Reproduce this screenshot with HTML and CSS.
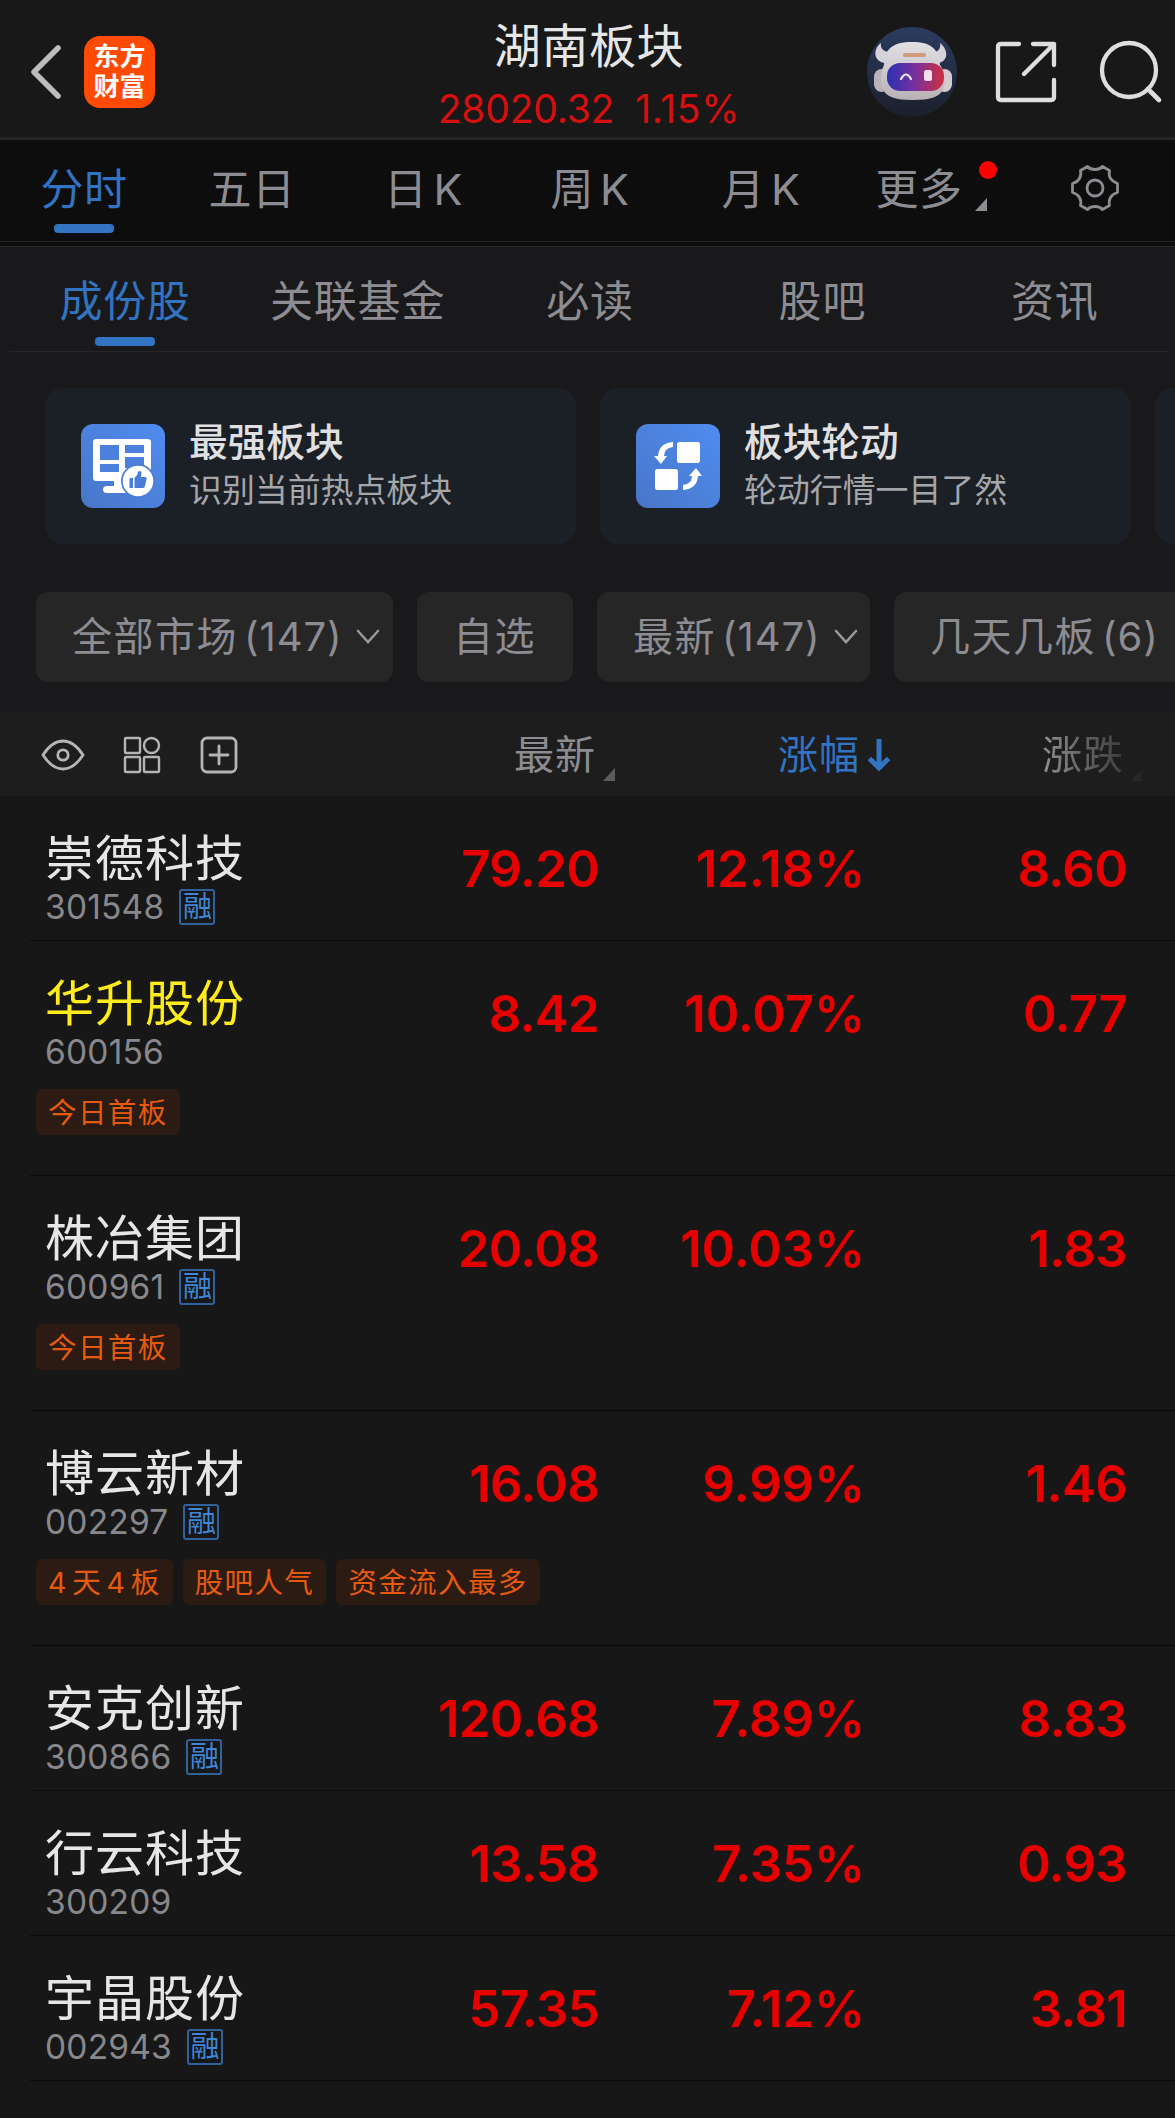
FILE: index.html
```
<!DOCTYPE html>
<html lang="zh-CN">
<head>
<meta charset="utf-8">
<title>湖南板块</title>
<link rel="stylesheet" href="styles.css">
</head>
<body>
<header class="topbar">
  <div class="topbar-left">
    <svg class="back" viewBox="0 0 32 56"><path d="M28 4 4 28 28 52" fill="none" stroke="#bdbdbd" stroke-width="5.5" stroke-linecap="round" stroke-linejoin="round"/></svg>
    <div class="logo"><span>东方</span><span>财富</span></div>
  </div>
  <div class="heading">
    <h1>湖南板块</h1>
    <p><span class="index">28020.32</span><span class="change">1.15%</span></p>
  </div>
  <div class="topbar-right">
    <svg class="robot" viewBox="0 0 90 90">
      <defs>
        <linearGradient id="sky" x1="0" y1="0" x2="0" y2="1"><stop offset="0" stop-color="#2b3c60"/><stop offset="1" stop-color="#1b1f2b"/></linearGradient>
        <linearGradient id="visor" x1="0" y1="0" x2="1" y2="0"><stop offset="0" stop-color="#2b31b4"/><stop offset=".5" stop-color="#7a2f9c"/><stop offset="1" stop-color="#cf3040"/></linearGradient>
        <linearGradient id="shell" x1="0" y1="0" x2="0" y2="1"><stop offset="0" stop-color="#e2e0e5"/><stop offset="1" stop-color="#b8b1b6"/></linearGradient>
      </defs>
      <circle cx="45" cy="45" r="45" fill="url(#sky)"/>
      <path d="M14 16C7 21 5 33 17 36L24 25C17 25 13 22 14 16ZM73 16C80 21 83 33 72 36L66 25C71 25 74 22 73 16Z" fill="#d5d3d9"/>
      <rect x="7" y="42" width="15" height="23" rx="7.500" fill="#b9b2b8"/><rect x="70" y="42" width="15" height="23" rx="7.500" fill="#d3cbd0"/>
      <path d="M17 38C17 22 26 15 45 15S72 22 73 38C77 44 79 52 77 60C74 70 64 73 46 73S18 70 15 60C13 52 14 44 17 38Z" fill="url(#shell)"/>
      <rect x="20" y="36" width="57" height="28" rx="13" fill="url(#visor)"/>
      <path d="M34 52q5-9 10 0" fill="none" stroke="#e9e6ff" stroke-width="2.200" stroke-linecap="round"/><rect x="57" y="43" width="8" height="11" rx="2.500" fill="#f3dfee"/>
      <rect x="36" y="26" width="23" height="4" rx="2" fill="#cf9b7c"/>
    </svg>
    <svg class="share" viewBox="0 0 62 62"><path d="M24 3H6Q3 3 3 6V56Q3 59 6 59H56Q59 59 59 56V39M38 3H59V24M59 3 29 33" fill="none" stroke="#dedede" stroke-width="4.3" stroke-linecap="round" stroke-linejoin="round"/></svg>
    <svg class="search" viewBox="0 0 64 64"><circle cx="30" cy="30" r="27" fill="none" stroke="#dedede" stroke-width="4.3"/><path d="M49 49 60 60" stroke="#dedede" stroke-width="4.6" stroke-linecap="round"/></svg>
  </div>
</header>

<nav class="periods">
  <a class="active">分时</a><a>五日</a><a>日 K</a><a>周 K</a><a>月 K</a>
  <a class="more">更多<i class="dot"></i><i class="corner"></i></a>
  <svg class="gear" viewBox="0 0 50 50" fill="none" stroke="#8c8c92" stroke-width="2.800" stroke-linejoin="round"><circle cx="25" cy="25" r="8"/><path d="M17.500 3.500Q20 6.500 25 6.500T32.500 3.500L39.500 7.500Q38.500 12.500 40.500 15.500T47.500 20.500V29.500Q42.500 31 40.500 34.500T39.500 42.500L32.500 46.500Q30 43.500 25 43.500T17.500 46.500L10.500 42.500Q11.500 38 9.500 34.500T2.500 29.500V20.500Q7.500 19 9.500 15.500T10.500 7.500Z"/></svg>
</nav>

<nav class="sections">
  <a class="active">成份股</a><a>关联基金</a><a>必读</a><a>股吧</a><a>资讯</a>
</nav>

<section class="cards">
  <article class="card">
    <svg class="card-icon" viewBox="0 0 84 84">
      <defs><linearGradient id="blue" x1="1" y1="0" x2="0" y2="1"><stop offset="0" stop-color="#508cf0"/><stop offset="1" stop-color="#4876c8"/></linearGradient></defs>
      <rect width="84" height="84" rx="12" fill="url(#blue)"/>
      <rect x="12" y="15" width="58" height="42" rx="3" fill="#fff"/>
      <path d="M19 21H38V36H19ZM44 21H63V29H44ZM19 40H38V48H19ZM44 33H63V44H44Z" fill="#4b80dc"/>
      <path d="M33 57V62H26Q22 62 22 65.500T26 69H46V57Z" fill="#fff"/>
      <circle cx="57" cy="57" r="17" fill="#4a7dd8"/><circle cx="57" cy="57" r="15.300" fill="#fff"/>
      <path d="M48.500 54H52V64H48.500ZM53.500 54Q57 51 57 48Q59 46 60.500 48.500L60 53H64Q66 53 65.500 55.500L64 62Q63.500 64 62 64H53.500Z" fill="#4a7dd8"/>
    </svg>
    <div><h2>最强板块</h2><p>识别当前热点板块</p></div>
  </article>
  <article class="card">
    <svg class="card-icon" viewBox="0 0 84 84">
      <rect width="84" height="84" rx="12" fill="url(#blue)"/>
      <rect x="41" y="18" width="23" height="21" rx="2.500" fill="#fff"/><rect x="19" y="45" width="23" height="21" rx="2.500" fill="#fff"/>
      <path d="M37 18Q23 19 22 32H18L25 40 31 32H28Q28 24 37 23ZM47 66Q61 65 62 52H66L60 44 53 52H56Q56 60 47 61Z" fill="#fff"/>
    </svg>
    <div><h2>板块轮动</h2><p>轮动行情一目了然</p></div>
  </article>
  <article class="card"></article>
</section>

<section class="filters">
  <button class="wide">全部市场<b>(147)</b><svg viewBox="0 0 24 16"><path d="M2 2 12 13 22 2"/></svg></button>
  <button class="own">自选</button>
  <button class="latest">最新<b>(147)</b><svg viewBox="0 0 24 16"><path d="M2 2 12 13 22 2"/></svg></button>
  <button class="days">几天几板<b>(6)</b></button>
</section>

<div class="table-head">
  <div class="tools">
    <svg width="44" height="38" viewBox="0 0 44 38"><path d="M2 19Q11 5 22 5T42 19Q33 33 22 33T2 19Z"/><circle cx="22" cy="19" r="5.200"/></svg>
    <svg width="38" height="38" viewBox="0 0 38 38"><g stroke-width="2.400"><rect x="2" y="2" width="15" height="15" rx="1"/><circle cx="28.500" cy="9.500" r="7.500"/><rect x="2" y="21" width="15" height="15" rx="1"/><rect x="21" y="21" width="15" height="15" rx="1"/></g></svg>
    <svg width="38" height="38" viewBox="0 0 38 38"><rect x="2" y="2" width="34" height="34" rx="5"/><path d="M19 10V28M10 19H28"/></svg>
  </div>
  <span class="col price-col">最新<i class="corner"></i></span>
  <span class="col pct-col">涨幅<svg class="arrow" viewBox="0 0 24 34"><path d="M12 1V29M2.500 20.500 12 30 21.500 20.500" fill="none" stroke="#3273c2" stroke-width="5"/></svg></span>
  <span class="col chg-col">涨跌<i class="corner"></i></span>
</div>

<main class="rows">
  <div class="row"><div class="stock"><h3>崇德科技</h3><p>301548<em>融</em></p></div><strong>79.20</strong><strong class="pct">12.18%</strong><strong>8.60</strong></div>
  <div class="row tall"><div class="stock"><h3 class="held">华升股份</h3><p>600156</p></div><strong>8.42</strong><strong class="pct">10.07%</strong><strong>0.77</strong><div class="tags"><span>今日首板</span></div></div>
  <div class="row tall"><div class="stock"><h3>株冶集团</h3><p>600961<em>融</em></p></div><strong>20.08</strong><strong class="pct">10.03%</strong><strong>1.83</strong><div class="tags"><span>今日首板</span></div></div>
  <div class="row tall"><div class="stock"><h3>博云新材</h3><p>002297<em>融</em></p></div><strong>16.08</strong><strong class="pct">9.99%</strong><strong>1.46</strong><div class="tags"><span>4 天 4 板</span><span>股吧人气</span><span>资金流入最多</span></div></div>
  <div class="row"><div class="stock"><h3>安克创新</h3><p>300866<em>融</em></p></div><strong>120.68</strong><strong class="pct">7.89%</strong><strong>8.83</strong></div>
  <div class="row"><div class="stock"><h3>行云科技</h3><p>300209</p></div><strong>13.58</strong><strong class="pct">7.35%</strong><strong>0.93</strong></div>
  <div class="row"><div class="stock"><h3>宇晶股份</h3><p>002943<em>融</em></p></div><strong>57.35</strong><strong class="pct">7.12%</strong><strong>3.81</strong></div>
</main>
</body>
</html>
```
FILE: styles.css
```
* { box-sizing: border-box; margin: 0; padding: 0; }
body {
  width: 1175px;
  height: 2118px;
  overflow: hidden;
  background: #171717;
  color: #8c8c92;
  font-family: Inter, "Noto Sans CJK SC", sans-serif;
}
svg { display: block; flex: none; }
h1, h2, h3, b, em { font-weight: 400; font-style: normal; }

.topbar {
  height: 140px;
  border-bottom: 3px solid #262626;
  background: #181818;
  display: grid;
  grid-template-columns: 1fr 400px 1fr;
}
.topbar-left { display: flex; align-items: center; padding: 4px 0 0 30px; gap: 22px; }
.back { width: 32px; height: 56px; }
.logo {
  width: 71px;
  height: 72px;
  border-radius: 16px;
  background: #ff4a04;
  color: #fff;
  display: flex;
  flex-direction: column;
  align-items: center;
  justify-content: center;
  font-size: 26px;
  line-height: 30px;
  font-weight: 700;
}
.heading { text-align: center; padding: 14px 0 0 3px; }
.heading h1 { font-size: 47px; line-height: 64px; letter-spacing: .6px; color: #e6e6e6; }
.heading p { display: flex; justify-content: center; gap: 21px; font-size: 39px; line-height: 61px; color: #d60f0f; }
.index { letter-spacing: -.2px; }
.change { letter-spacing: .7px; }
.topbar-right { display: flex; align-items: center; justify-content: flex-end; padding: 4px 12px 0 0; }
.robot { width: 90px; height: 90px; margin-right: 38px; }
.share { width: 62px; height: 62px; margin-right: 42px; }
.search { width: 64px; height: 64px; }

.periods {
  height: 107px;
  padding-top: 1px;
  background: #0d0d0d;
  display: grid;
  grid-template-columns: 168px 168px 175px 158px 184px 132px 190px;
  grid-template-rows: 100px 5px;
  border-bottom: 1px solid #262626;
}
.periods a {
  position: relative;
  display: flex;
  justify-content: center;
  font-size: 43px;
  line-height: 96px;
  letter-spacing: .6px;
  word-spacing: -7px;
}
.periods::after { content: ""; grid-column: 1 / -1; border-top: 1px solid #262626; }
.gear { width: 50px; height: 50px; margin: 22px 0 0 85px; }
.active { color: #3273c2; position: relative; }
.active::after {
  content: "";
  position: absolute;
  left: calc(50% - 30px);
  top: 83px;
  width: 60px;
  height: 9px;
  border-radius: 4px;
  background: #3273c2;
}
.dot { position: absolute; right: -12px; top: 20px; width: 18px; height: 18px; border-radius: 50%; background: #f00; }
.corner { display: block; width: 12px; height: 13px; background: #5c5c60; clip-path: polygon(100% 0, 100% 100%, 0 100%); }
.more .corner { position: absolute; right: -2px; top: 57px; background: #8c8c92; }

.sections {
  height: 105px;
  padding: 0 4px 0 9px;
  background: linear-gradient(#262627, #262627) 9px 100% / 1160px 1px no-repeat #19191b;
  display: grid;
  grid-template-columns: repeat(5, 1fr);
}
.sections a { text-align: center; font-size: 43px; line-height: 108px; letter-spacing: .8px; }
.sections .active::after { top: 90px; }

.cards { background: #19191b; display: flex; gap: 24px; padding: 36px 0 48px 45px; overflow: hidden; }
.card {
  flex: none;
  width: 531px;
  height: 156px;
  border-radius: 18px;
  background: #1b1f26;
  padding: 0 36px;
  display: flex;
  align-items: center;
  gap: 24px;
}
.card-icon { width: 84px; height: 84px; }
.card h2 { font-size: 38.700px; line-height: 48px; font-weight: 500; color: #e0e0e2; }
.card p { font-size: 32.900px; line-height: 49px; color: #a4a6aa; }

.filters { background: #19191b; display: flex; gap: 24px; padding: 0 0 30px 36px; overflow: hidden; }
.filters button {
  flex: none;
  height: 90px;
  border: 0;
  border-radius: 12px;
  background: #262626;
  color: #8c8c92;
  font: 40px/92px Inter, "Noto Sans CJK SC", sans-serif;
  letter-spacing: 1.500px;
  padding-left: 36px;
  display: flex;
  align-items: center;
}
.filters b { margin-left: 6px; letter-spacing: .9px; }
.filters svg { width: 24px; height: 16px; margin-left: 14px; fill: none; stroke: #98989c; stroke-width: 2.600; stroke-linecap: round; }
.wide { width: 357px; }
.own { width: 156px; }
.latest { width: 273px; }
.days { width: 300px; }

.table-head {
  height: 84px;
  background: #1d1d1d;
  display: grid;
  grid-template-columns: 420px 174px 264px 264px;
  align-items: center;
}
.tools { display: flex; align-items: center; gap: 38px; padding-left: 41px; }
.tools svg { fill: none; stroke: #b4b4b4; stroke-width: 2.800; stroke-linecap: round; }
.tools svg:nth-child(3) { margin-left: 1px; }
.col { position: relative; left: 2px; text-align: right; font-size: 40px; line-height: 86px; letter-spacing: 1px; }
.col .corner { position: absolute; right: -19px; top: 56px; }
.arrow { position: absolute; right: -31px; top: 26px; width: 24px; height: 34px; }
.pct-col { color: #3273c2; }
.chg-col { -webkit-mask-image: linear-gradient(90deg, #000 185px, transparent 295px); padding-right: 24px; margin-right: -24px; }
.chg-col .corner { right: 5px; }

.row {
  height: 145px;
  display: grid;
  grid-template-columns: 300px 299px 264px 264px;
  grid-template-rows: 144px;
  background: linear-gradient(#0b0b0b, #0b0b0b) 30px 100% / 1145px 1px no-repeat;
}
.row.tall { height: 235px; grid-template-rows: 144px 46px; }
.stock { padding: 33px 0 0 45px; }
.stock h3 { font-size: 49px; line-height: 60px; letter-spacing: 1px; color: #e6e6e6; white-space: nowrap; }
.stock h3.held { color: #ffec1c; }
.stock p { display: flex; align-items: center; height: 36px; font-size: 33.500px; letter-spacing: .2px; color: #88888c; }
.stock em {
  width: 36px;
  height: 36px;
  margin-left: 15px;
  border: 2px solid #2f629c;
  border-radius: 3px;
  color: #3f86d8;
  font-size: 29px;
  line-height: 32px;
  letter-spacing: 0;
  display: flex;
  justify-content: center;
}
.row strong { text-align: right; font-size: 51px; font-weight: 600; letter-spacing: -.8px; line-height: 146px; color: #e60000; }
.row .pct { letter-spacing: -.2px; margin-right: -2px; }
.tags { grid-column: 1 / -1; display: flex; gap: 10px; padding-left: 36px; margin-top: 4px; }
.tags span {
  height: 46px;
  border-radius: 6px;
  padding: 0 12px;
  background: #2b1b13;
  color: #e65a10;
  font-size: 28.500px;
  line-height: 47px;
  letter-spacing: 1.400px;
  word-spacing: -5px;
}
```
